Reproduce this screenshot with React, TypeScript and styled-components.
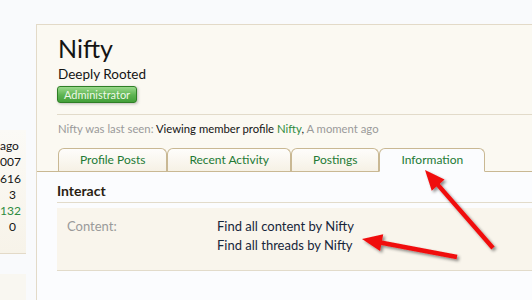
import React from "react";
import styled, { createGlobalStyle } from "styled-components";

const GlobalStyle = createGlobalStyle`
  html, body {
    margin: 0;
    padding: 0;
    background: #f9fafc;
    font-family: Lato, "Open Sans", sans-serif;
    color: #141414;
  }
`;

const Page = styled("div")`
  position: relative;
  display: flex;
  align-items: flex-start;
  width: 532px;
  height: 300px;
  overflow: hidden;
`;

const Sidebar = styled("div")`
  width: 26px;
  flex-shrink: 0;
  padding-top: 130px;
`;

const StatsBox = styled("div")`
  background: linear-gradient(to bottom, #fbfaf6, #f7f3e9);
  border-bottom: 1px solid #e3dac8;
  padding: 8px 10px 17px 0;
`;

const StatValue = styled("div")<{ $link?: boolean }>`
  text-align: right;
  font-size: 12px;
  line-height: 16.3px;
  color: ${(p) => (p.$link ? "#2e8b3e" : "#141414")};
  white-space: nowrap;
`;

const SideBlock = styled("div")`
  margin-top: 20px;
  height: 40px;
  background: #f9f7f1;
`;

const Main = styled("div")`
  flex: 1;
  margin-left: 10px;
  margin-top: 24px;
  height: 276px;
  border-left: 1px solid #e3dac8;
  border-top: 1px solid #e3dac8;
  background: #fbfcfe;
`;

const Header = styled("div")`
  background: #fbf9f2;
  padding: 8px 0 0 20px;
`;

const Title = styled("h1")`
  margin: 0;
  padding-left: 1px;
  font-size: 25px;
  font-weight: normal;
  line-height: 30px;
  color: #141414;
`;

const Subtitle = styled("div")`
  padding-left: 1px;
  margin-top: 3px;
  font-size: 13.5px;
  line-height: 17px;
`;

const Badge = styled("span")`
  display: inline-block;
  margin-top: 3px;
  padding: 0 6px;
  height: 15px;
  line-height: 15px;
  font-size: 11px;
  color: #eef8e8;
  background: linear-gradient(to bottom, #9ad98b, #5cb351 55%, #44a03a);
  border: 1px solid #2f7f26;
  border-radius: 3px;
  box-shadow: 1px 1px 3px rgba(0, 0, 0, 0.25);
`;

const Divider = styled("div")`
  margin-top: 11px;
  border-top: 1px solid #e2dbca;
`;

const LastSeen = styled("div")`
  padding-left: 1px;
  margin-top: 6px;
  font-size: 11.3px;
  line-height: 16px;
  color: #141414;
`;

const Muted = styled("span")`
  color: #9a9a9a;
`;

const GreenLink = styled("span")`
  color: #2e8b3e;
`;

const TabBar = styled("div")`
  display: flex;
  margin-top: 11px;
  margin-left: -20px;
  padding-left: 21px;
  border-bottom: 1px solid #c9b893;
`;

const Tab = styled("div")<{ $active?: boolean }>`
  height: 22px;
  padding: 0 21px;
  margin-bottom: -1px;
  font-size: 12px;
  line-height: 22px;
  color: #237a35;
  white-space: nowrap;
  border: 1px solid #c9b893;
  border-bottom: ${(p) => (p.$active ? "1px solid #fbfcfe" : "none")};
  border-radius: 6px 6px 0 0;
  background: ${(p) =>
    p.$active ? "#fbfcfe" : "linear-gradient(to bottom, #fefdfb, #f6f1e5)"};
`;

const Body = styled("div")`
  padding: 10px 0 0 20px;
`;

const SectionTitle = styled("h3")`
  margin: 0;
  padding-bottom: 3px;
  font-size: 14px;
  font-weight: bold;
  line-height: 17px;
  color: #2a1e12;
  border-bottom: 1px solid #e2dbca;
`;

const InfoBox = styled("div")`
  display: flex;
  margin-top: 5px;
  padding: 9px 0 15px 10px;
  background: #f9f5ec;
  border-bottom: 1px solid #e2dbca;
`;

const InfoLabel = styled("div")`
  width: 150px;
  flex-shrink: 0;
  font-size: 13px;
  line-height: 19px;
  color: #9a9a9a;
`;

const InfoLinks = styled("div")`
  display: flex;
  flex-direction: column;
  font-size: 13px;
  line-height: 19px;
  color: #17263a;
`;

const Annotations = styled("svg")`
  position: absolute;
  left: 0;
  top: 0;
  pointer-events: none;
`;

type Pt = [number, number];

function arrowPoints(tip: Pt, tail: Pt, shaft = 2.2, headLen = 20, headHalf = 8.5) {
  const dx = tip[0] - tail[0];
  const dy = tip[1] - tail[1];
  const len = Math.hypot(dx, dy);
  const ux = dx / len;
  const uy = dy / len;
  const nx = -uy;
  const ny = ux;
  const bx = tip[0] - ux * headLen;
  const by = tip[1] - uy * headLen;
  const pts: Pt[] = [
    [tail[0] + nx * shaft, tail[1] + ny * shaft],
    [bx + nx * shaft, by + ny * shaft],
    [bx + nx * headHalf, by + ny * headHalf],
    tip,
    [bx - nx * headHalf, by - ny * headHalf],
    [bx - nx * shaft, by - ny * shaft],
    [tail[0] - nx * shaft, tail[1] - ny * shaft],
  ];
  return pts.map((p) => p.join(",")).join(" ");
}

const stats = [
  { v: "ago" },
  { v: "007" },
  { v: "616" },
  { v: "3" },
  { v: "132", link: true },
  { v: "0" },
];

const tabs = ["Profile Posts", "Recent Activity", "Postings", "Information"];

export default function App() {
  return (
    <>
      <GlobalStyle />
      <Page>
        <Sidebar>
          <StatsBox>
            {stats.map((s, i) => (
              <StatValue key={i} $link={s.link}>
                {s.v}
              </StatValue>
            ))}
          </StatsBox>
          <SideBlock />
        </Sidebar>
        <Main>
          <Header>
            <Title>Nifty</Title>
            <Subtitle>Deeply Rooted</Subtitle>
            <Badge>Administrator</Badge>
            <Divider />
            <LastSeen>
              <Muted>Nifty was last seen:</Muted> Viewing member profile{" "}
              <GreenLink>Nifty</GreenLink>, <Muted>A moment ago</Muted>
            </LastSeen>
            <TabBar>
              {tabs.map((t) => (
                <Tab key={t} $active={t === "Information"}>
                  {t}
                </Tab>
              ))}
            </TabBar>
          </Header>
          <Body>
            <SectionTitle>Interact</SectionTitle>
            <InfoBox>
              <InfoLabel>Content:</InfoLabel>
              <InfoLinks>
                <span>Find all content by Nifty</span>
                <span>Find all threads by Nifty</span>
              </InfoLinks>
            </InfoBox>
          </Body>
        </Main>
        <Annotations width="532" height="300" viewBox="0 0 532 300">
          <defs>
            <filter id="shadow" x="-20%" y="-20%" width="140%" height="140%">
              <feDropShadow dx="2" dy="2" stdDeviation="1.5" floodColor="#000" floodOpacity="0.45" />
            </filter>
          </defs>
          <g fill="#f01010" filter="url(#shadow)">
            <polygon points={arrowPoints([425, 170], [493, 248])} />
            <polygon points={arrowPoints([362, 239], [457, 257])} />
          </g>
        </Annotations>
      </Page>
    </>
  );
}
